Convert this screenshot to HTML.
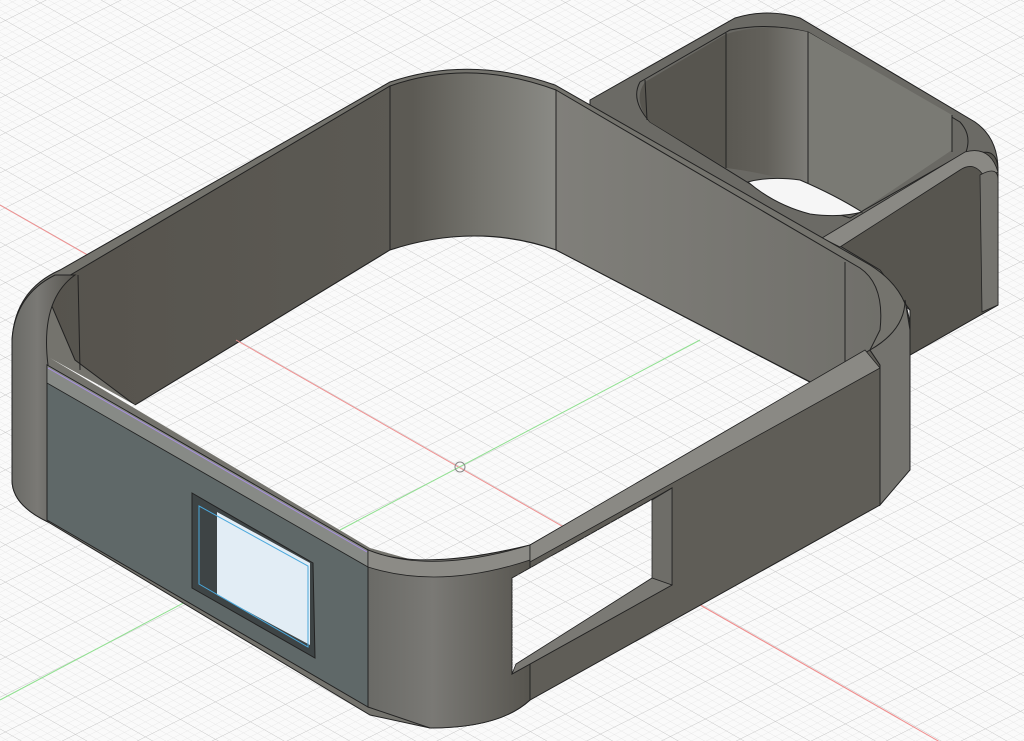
<!DOCTYPE html>
<html><head><style>html,body{margin:0;padding:0;background:#fafafa;overflow:hidden}svg{display:block}</style></head>
<body>
<svg width="1024" height="741" viewBox="0 0 1024 741" xmlns="http://www.w3.org/2000/svg">
<defs>
<pattern id="g1" width="7" height="7" patternUnits="userSpaceOnUse" patternTransform="matrix(1 0.57 1 -0.5 460 467)">
<path d="M0 0H7M0 0V7" stroke="#e0e0e0" stroke-width="0.6" fill="none"/>
</pattern>
<pattern id="g2" width="35" height="35" patternUnits="userSpaceOnUse" patternTransform="matrix(1 0.57 1 -0.5 460 467)">
<path d="M0 0H35M0 0V35" stroke="#bdbdbd" stroke-width="0.7" fill="none"/>
</pattern>
<linearGradient id="wl" x1="0" x2="1" y1="0" y2="0"><stop offset="0" stop-color="#56534d"/><stop offset="0.72" stop-color="#5c5a54"/><stop offset="0.85" stop-color="#74736d"/><stop offset="1" stop-color="#8a8a85"/></linearGradient>
<linearGradient id="wr" x1="0" x2="1"><stop offset="0" stop-color="#807f7a"/><stop offset="1" stop-color="#706f6a"/></linearGradient>
<linearGradient id="cr" x1="0" x2="1"><stop offset="0" stop-color="#6a6a66"/><stop offset="0.4" stop-color="#7a7975"/><stop offset="1" stop-color="#57554f"/></linearGradient>
<linearGradient id="sb" x1="0" x2="1"><stop offset="0" stop-color="#5a5852"/><stop offset="0.5" stop-color="#63615b"/><stop offset="1" stop-color="#7e7d78"/></linearGradient>
</defs>
<rect width="1024" height="741" fill="#fafafa"/>
<rect width="1024" height="741" fill="url(#g1)"/>
<rect width="1024" height="741" fill="url(#g2)"/>
<line x1="0" y1="205" x2="1024" y2="790" stroke="#f09090" stroke-width="1"/>
<line x1="0" y1="700" x2="700" y2="330" stroke="#90e090" stroke-width="1"/>
<circle cx="460" cy="467" r="5" fill="none" stroke="#888"/>

<!-- small back box -->
<path d="M590 100 L735 18 Q768 8 800 18 L975 122 Q998 138 998 170 L998 305 L910 355 L910 310 L830 250 L590 110 Z" fill="#6b6a65" stroke="#222" stroke-width="1"/>
<!-- inner walls -->
<path d="M640 82 L730 30 Q768 22 808 32 L960 122 Q972 135 966 152 L850 218 L760 190 L650 122 Q630 100 640 82 Z" fill="#6a6964" stroke="#222"/>
<path d="M645 82 L726 34 L726 168 L650 122 Q632 100 645 82 Z" fill="#57554f"/>
<path d="M726 34 Q765 22 808 32 L808 185 Q760 172 726 168 Z" fill="url(#sb)"/>
<path d="M808 32 L952 115 L952 150 L860 212 L808 185 Z" fill="#7a7a74"/>
<line x1="726" y1="33" x2="726" y2="168" stroke="#222"/>
<line x1="808" y1="32" x2="808" y2="185" stroke="#222"/>
<line x1="952" y1="115" x2="952" y2="152" stroke="#222"/>
<line x1="645" y1="80" x2="647" y2="120" stroke="#222"/>
<path d="M748 182 Q770 176 800 180 Q835 195 862 212 Q840 218 810 214 Q775 205 748 182 Z" fill="#f6f6f6" stroke="#222"/>
<!-- front rim + face of small box -->
<path d="M830 240 L975 155 Q998 145 998 172 L998 305 L910 355 L910 310 L880 270 Z" fill="#57554f" stroke="#222"/>
<path d="M822 238 L965 152 Q990 145 998 172 L985 178 Q975 160 960 170 L840 247 Z" fill="#8a8984" stroke="#222" stroke-width="0.8"/>
<path d="M980 175 Q998 165 998 180 L998 305 L982 312 Z" fill="#74736e" stroke="#222" stroke-width="0.8"/>

<!-- main body silhouette -->
<path d="M12 340 Q15 290 60 270 L390 82 Q470 55 555 85 L870 265 Q910 290 910 330 L910 470 L530 700 Q500 728 430 728 L370 715 L48 522 Q12 505 12 480 Z" fill="#74736d" stroke="#222"/>
<!-- inner back-left wall -->
<path d="M45 290 L390 86 Q470 58 556 90 L556 250 Q480 222 390 250 L135 405 L75 360 Z" fill="url(#wl)" stroke="#222"/>
<line x1="390" y1="86" x2="390" y2="250" stroke="#222"/>
<line x1="78" y1="275" x2="80" y2="370" stroke="#222"/>
<!-- inner back-right wall -->
<path d="M556 90 L860 268 Q885 285 880 330 L845 400 L556 250 Z" fill="url(#wr)" stroke="#222"/>
<line x1="845" y1="262" x2="845" y2="398" stroke="#222"/>
<!-- interior white floor -->
<path d="M135 405 L390 250 Q475 222 556 250 L848 402 L530 548 Q480 565 420 562 L370 548 L50 358 Z" fill="#fafafa"/>
<path d="M135 405 L390 250 Q475 222 556 250 L848 402 L530 548 Q480 565 420 562 L370 548 L50 358 Z" fill="url(#g1)"/>
<path d="M135 405 L390 250 Q475 222 556 250 L848 402 L530 548 Q480 565 420 562 L370 548 L50 358 Z" fill="url(#g2)"/>
<path d="M135 405 L390 250 Q475 222 556 250 L848 402" fill="none" stroke="#222"/>
<line x1="236" y1="340" x2="900" y2="719" stroke="#f09090"/>
<line x1="340" y1="530" x2="700" y2="340" stroke="#90e090"/>
<circle cx="460" cy="467" r="5" fill="none" stroke="#888"/>
<!-- left rounded corner -->
<path d="M12 340 Q15 295 55 275 L75 275 Q40 300 48 365 L48 522 Q12 505 12 480 Z" fill="url(#cr)" stroke="#222"/>
<!-- front-left face -->
<path d="M47 365 L368 550 L368 707 L47 520 Z" fill="#5f6868" stroke="#222"/>
<path d="M47 365 L368 550 L368 567 L47 383 Z" fill="#878a86" stroke="#222" stroke-width="0.8"/>
<line x1="48" y1="368" x2="367" y2="552" stroke="#a890e0" stroke-width="1"/>
<!-- window -->
<path d="M192 493 L313 563 L315 658 L192 588 Z" fill="#3e4445" stroke="#222"/>
<path d="M217 512 L310 563 L310 645 L217 595 Z" fill="#e2edf5"/>
<path d="M199 506 L308 566 L308 647 L199 584 Z" fill="none" stroke="#4aa8dc" stroke-width="1"/>
<!-- front corner -->
<path d="M368 550 Q420 572 530 545 L530 700 Q500 728 430 728 L368 707 Z" fill="url(#cr)" stroke="#222"/>
<path d="M368 550 Q430 575 530 545 L530 560 Q440 590 368 567 Z" fill="#8c8b86" stroke="#222" stroke-width="0.8"/>
<!-- front-right face -->
<path d="M530 545 L870 350 L880 365 L880 505 L530 700 Z" fill="#5f5d57" stroke="#222"/>
<path d="M530 545 L865 350 L880 368 L530 562 Z" fill="#8a8984" stroke="#222" stroke-width="0.8"/>
<path d="M870 350 Q905 330 905 300 L910 330 L910 470 L880 505 L880 365 Z" fill="#74736e" stroke="#222"/>
<!-- right window opening -->
<path d="M512 578 L672 488 L672 585 L512 674 Z" fill="#fafafa" stroke="#222"/>
<path d="M512 578 L672 488 L672 585 L512 674 Z" fill="url(#g1)"/>
<path d="M512 578 L672 488 L672 585 L512 674 Z" fill="url(#g2)"/>
<line x1="360" y1="549" x2="700" y2="740" stroke="#f09090" opacity="0"/>
<path d="M652 500 L672 488 L672 585 L652 580 Z" fill="#6e6d68" stroke="#222" stroke-width="0.8"/>
<path d="M516 664 L652 578 L672 585 L512 674 Z" fill="#7a7974" stroke="#222" stroke-width="0.8"/>
</svg>
</body></html>
